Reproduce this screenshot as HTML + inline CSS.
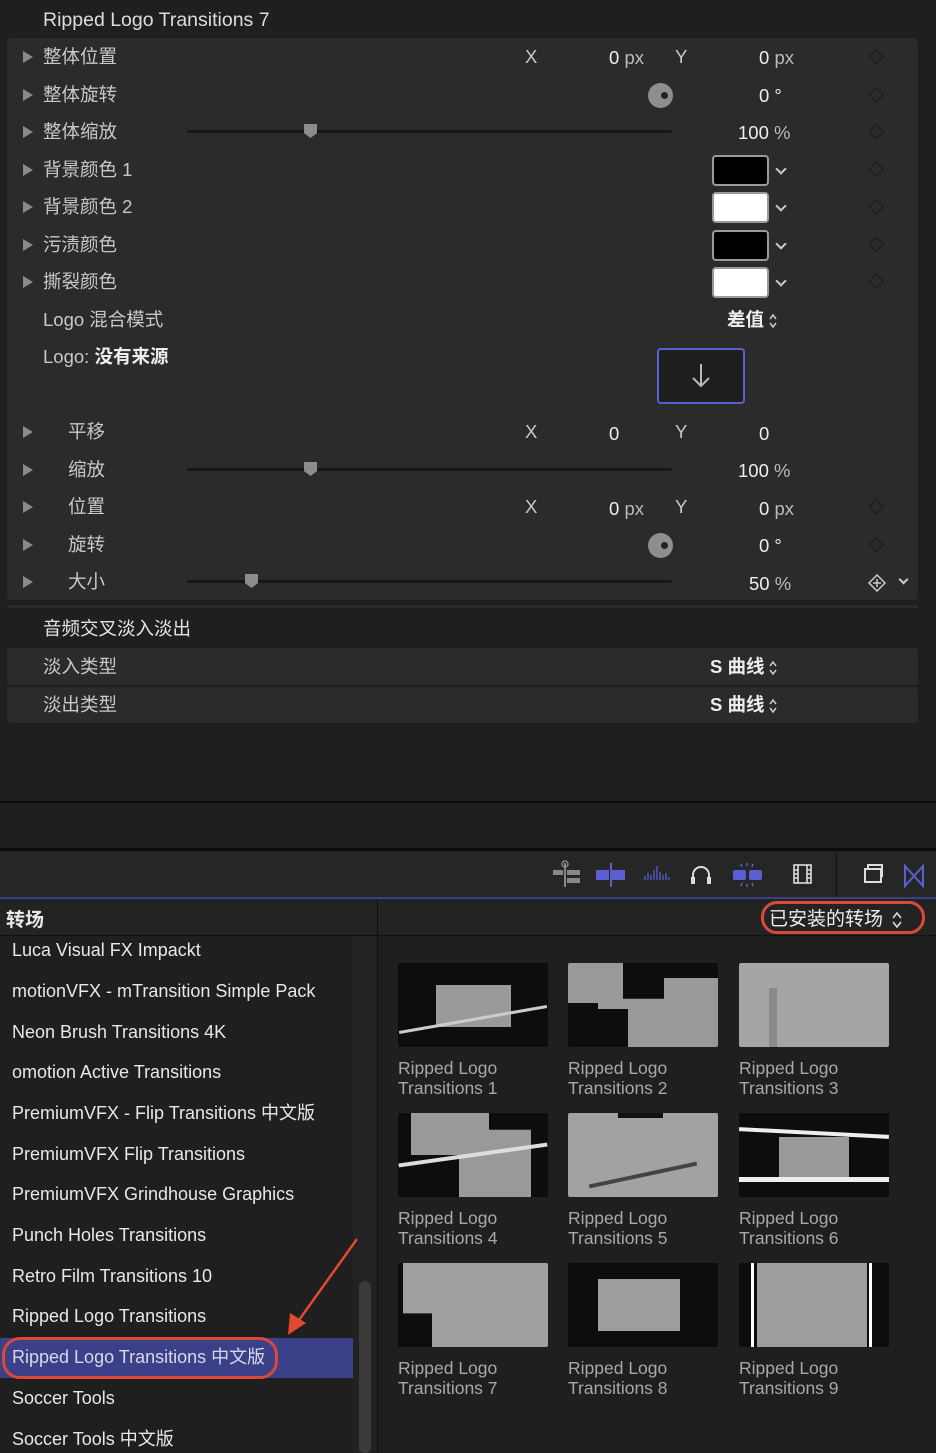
<!DOCTYPE html>
<html><head><meta charset="utf-8"><style>
*{margin:0;padding:0;box-sizing:border-box}
body{width:936px;height:1453px;background:#1f1f1f;font-family:"Liberation Sans","Noto Sans CJK SC",sans-serif;color:#c8c8c8;position:relative;overflow:hidden}
.a{position:absolute;white-space:nowrap}
.t{font-size:18.5px;line-height:22px}
.tri{position:absolute;width:0;height:0;border-left:10px solid #8a8a8a;border-top:6px solid transparent;border-bottom:6px solid transparent}
.dia{position:absolute;width:11px;height:11px;border:1.5px solid #1a1a1a;transform:rotate(45deg)}
.sl{position:absolute;height:3px;background:#171717;border-radius:2px}
.knob{position:absolute;width:13px;height:14px;background:#8c8c8c;clip-path:polygon(0 0,100% 0,100% 65%,50% 100%,0 65%)}
.rot{position:absolute;width:25px;height:25px;border-radius:50%;background:#8e8e8e}
.rot:after{content:"";position:absolute;left:13px;top:9px;width:7px;height:7px;border-radius:50%;background:#222}
.sw{position:absolute;left:712px;width:57px;height:31px;border:2px solid #9a9a9a;border-radius:4px}
.chev{position:absolute;left:777px;width:8px;height:8px;border-right:2px solid #ccc;border-bottom:2px solid #ccc;transform:rotate(45deg)}
.li{position:absolute;left:12px;font-size:18px;color:#e8e8e8;line-height:22px}
.th{position:absolute;width:150px;height:84px;border-radius:2px;overflow:hidden}
.lb{position:absolute;font-size:17.5px;color:#a8a8a8;line-height:20px}
.ud{display:inline-block;vertical-align:middle;margin-left:4px}
</style></head><body>
<div class="a" style="left:43px;top:9px;color:#ddd;font-size:19.5px;line-height:22px">Ripped Logo Transitions 7</div>
<div class="a" style="left:7px;top:38px;width:911px;height:562px;background:#2b2b2b;border-radius:4px"></div>

<div class="tri" style="left:23px;top:51px"></div><div class="a t" style="left:43px;top:46px">整体位置</div>
<div class="a t" style="left:525px;top:46px">X</div><div class="a t" style="left:609px;top:47px;color:#eee">0 <span style="color:#bbb">px</span></div>
<div class="a t" style="left:675px;top:46px">Y</div><div class="a t" style="left:759px;top:47px;color:#eee">0 <span style="color:#bbb">px</span></div>
<div class="dia" style="left:871px;top:51px"></div>

<div class="tri" style="left:23px;top:89px"></div><div class="a t" style="left:43px;top:84px">整体旋转</div>
<div class="rot" style="left:648px;top:83px"></div><div class="a t" style="left:759px;top:85px;color:#eee">0 °</div>
<div class="dia" style="left:871px;top:89px"></div>

<div class="tri" style="left:23px;top:126px"></div><div class="a t" style="left:43px;top:121px">整体缩放</div>
<div class="sl" style="left:187px;top:130px;width:485px"></div><div class="knob" style="left:304px;top:124px"></div>
<div class="a t" style="left:738px;top:122px;color:#eee">100 <span style="color:#bbb">%</span></div>
<div class="dia" style="left:871px;top:126px"></div>

<div class="tri" style="left:23px;top:164px"></div><div class="a t" style="left:43px;top:159px">背景颜色 1</div>
<div class="sw" style="top:155px;background:#000"></div><div class="chev" style="top:165px"></div><div class="dia" style="left:871px;top:164px"></div>
<div class="tri" style="left:23px;top:201px"></div><div class="a t" style="left:43px;top:196px">背景颜色 2</div>
<div class="sw" style="top:192px;background:#fff"></div><div class="chev" style="top:202px"></div><div class="dia" style="left:871px;top:201px"></div>
<div class="tri" style="left:23px;top:239px"></div><div class="a t" style="left:43px;top:234px">污渍颜色</div>
<div class="sw" style="top:230px;background:#000"></div><div class="chev" style="top:240px"></div><div class="dia" style="left:871px;top:239px"></div>
<div class="tri" style="left:23px;top:276px"></div><div class="a t" style="left:43px;top:271px">撕裂颜色</div>
<div class="sw" style="top:267px;background:#fff"></div><div class="chev" style="top:277px"></div><div class="dia" style="left:871px;top:276px"></div>

<div class="a t" style="left:43px;top:309px">Logo 混合模式</div>
<div class="a t" style="left:727px;top:309px;color:#eee;font-weight:bold">差值<svg class="ud" width="10" height="18"><path d="M2 7L5 3L8 7M2 11L5 15L8 11" stroke="#ccc" stroke-width="1.5" fill="none"/></svg></div>
<div class="a t" style="left:43px;top:346px">Logo: <b style="color:#eee">没有来源</b></div>
<div class="a" style="left:657px;top:348px;width:88px;height:56px;border:2px solid #5a5fd0;border-radius:4px;background:#1e1e1e"></div>
<svg class="a" style="left:690px;top:362px" width="22" height="28"><path d="M11 2V24M3 16L11 24L19 16" stroke="#bbb" stroke-width="2" fill="none"/></svg>

<div class="tri" style="left:23px;top:426px"></div><div class="a t" style="left:68px;top:421px">平移</div>
<div class="a t" style="left:525px;top:421px">X</div><div class="a t" style="left:609px;top:423px;color:#eee">0</div>
<div class="a t" style="left:675px;top:421px">Y</div><div class="a t" style="left:759px;top:423px;color:#eee">0</div>
<div class="tri" style="left:23px;top:464px"></div><div class="a t" style="left:68px;top:459px">缩放</div>
<div class="sl" style="left:187px;top:468px;width:485px"></div><div class="knob" style="left:304px;top:462px"></div>
<div class="a t" style="left:738px;top:460px;color:#eee">100 <span style="color:#bbb">%</span></div>
<div class="tri" style="left:23px;top:501px"></div><div class="a t" style="left:68px;top:496px">位置</div>
<div class="a t" style="left:525px;top:496px">X</div><div class="a t" style="left:609px;top:498px;color:#eee">0 <span style="color:#bbb">px</span></div>
<div class="a t" style="left:675px;top:496px">Y</div><div class="a t" style="left:759px;top:498px;color:#eee">0 <span style="color:#bbb">px</span></div>
<div class="dia" style="left:871px;top:501px"></div>
<div class="tri" style="left:23px;top:539px"></div><div class="a t" style="left:68px;top:534px">旋转</div>
<div class="rot" style="left:648px;top:533px"></div><div class="a t" style="left:759px;top:535px;color:#eee">0 °</div>
<div class="dia" style="left:871px;top:539px"></div>
<div class="tri" style="left:23px;top:576px"></div><div class="a t" style="left:68px;top:571px">大小</div>
<div class="sl" style="left:187px;top:580px;width:485px"></div><div class="knob" style="left:245px;top:574px"></div>
<div class="a t" style="left:749px;top:573px;color:#eee">50 <span style="color:#bbb">%</span></div>
<svg class="a" style="left:867px;top:573px" width="20" height="20"><path d="M10 2L18 10L10 18L2 10Z M10 6V14M6 10H14" stroke="#ccc" stroke-width="1.5" fill="none"/></svg>
<div class="a" style="left:900px;top:576px;width:7px;height:7px;border-right:2px solid #ccc;border-bottom:2px solid #ccc;transform:rotate(45deg)"></div>

<div class="a" style="left:7px;top:605px;width:911px;height:3px;background:#2b2b2b"></div>
<div class="a t" style="left:43px;top:618px;color:#e4e4e4">音频交叉淡入淡出</div>
<div class="a" style="left:7px;top:648px;width:911px;height:37px;background:#2b2b2b;border-radius:3px"></div>
<div class="a" style="left:7px;top:687px;width:911px;height:36px;background:#2b2b2b;border-radius:3px"></div>
<div class="a t" style="left:43px;top:656px">淡入类型</div>
<div class="a t" style="left:710px;top:656px;color:#eee;font-weight:bold">S 曲线<svg class="ud" width="10" height="18"><path d="M2 7L5 3L8 7M2 11L5 15L8 11" stroke="#ccc" stroke-width="1.5" fill="none"/></svg></div>
<div class="a t" style="left:43px;top:694px">淡出类型</div>
<div class="a t" style="left:710px;top:694px;color:#eee;font-weight:bold">S 曲线<svg class="ud" width="10" height="18"><path d="M2 7L5 3L8 7M2 11L5 15L8 11" stroke="#ccc" stroke-width="1.5" fill="none"/></svg></div>

<div class="a" style="left:0;top:801px;width:936px;height:2px;background:#0c0c0c"></div>
<div class="a" style="left:0;top:848px;width:936px;height:3px;background:#0c0c0c"></div>
<div class="a" style="left:0;top:851px;width:936px;height:47px;background:#262626"></div>
<div class="a" style="left:836px;top:851px;width:1px;height:47px;background:#111"></div>
<div class="a" style="left:0;top:897px;width:936px;height:2px;background:#3a3f8a"></div>
<svg class="a" style="left:548px;top:860px" width="390" height="32">
<g fill="#888"><rect x="5" y="10" width="10" height="5"/><rect x="19" y="10" width="13" height="5"/><rect x="19" y="18" width="13" height="5"/><rect x="16" y="3" width="2" height="24"/><circle cx="17" cy="4" r="3" fill="none" stroke="#888" stroke-width="1.5"/></g>
<g fill="#5a5fd0"><rect x="48" y="10" width="13" height="10"/><rect x="64" y="10" width="13" height="10"/><rect x="62" y="3" width="2" height="24"/></g>
<g stroke="#5a5fd0" stroke-width="1.3"><path d="M97 20v-4M100 20v-7M103 20v-5M106 20v-10M109 20v-14M112 20v-8M115 20v-5M118 20v-7M121 20v-3"/></g>
<path d="M145 23v-8a8 8 0 0 1 16 0v8" stroke="#ddd" stroke-width="2" fill="none"/><rect x="143" y="17" width="4" height="7" fill="#ddd"/><rect x="159" y="17" width="4" height="7" fill="#ddd"/>
<g fill="#5a5fd0"><rect x="185" y="10" width="13" height="10" rx="2"/><rect x="201" y="10" width="13" height="10" rx="2"/><path d="M199 3v3M193 4l1 3M205 4l-1 3M199 24v3M193 26l1-3M205 26l-1-3" stroke="#5a5fd0" stroke-width="1.5"/></g>
<g stroke="#ddd" stroke-width="1.6" fill="none"><rect x="246" y="5" width="17" height="18"/><path d="M250 5v18M259 5v18M246 10h4M246 14h4M246 18h4M259 10h4M259 14h4M259 18h4"/></g>
<g stroke="#ddd" stroke-width="2" fill="none"><rect x="317" y="9" width="16" height="13" fill="#262626"/><path d="M320 9V5h14v11h-1"/></g>
<path d="M357 6v20l18-20v20z" stroke="#5a5fd0" stroke-width="2" fill="none"/>
</svg>

<div class="a" style="left:0;top:899px;width:936px;height:36px;background:#232323"></div>
<div class="a" style="left:377px;top:899px;width:1px;height:554px;background:#0e0e0e"></div>
<div class="a" style="left:0;top:935px;width:936px;height:1px;background:#111"></div>
<div class="a" style="left:6px;top:905px;font-size:19px;color:#e8e8e8;font-weight:bold">转场</div>
<div class="a" style="left:761px;top:901px;width:164px;height:33px;border:3px solid #d94a3a;border-radius:16px"></div>
<div class="a" style="left:769px;top:904px;font-size:19px;color:#eee">已安装的转场<svg class="ud" style="margin-left:8px" width="12" height="22"><path d="M2 9L6 4L10 9M2 13L6 18L10 13" stroke="#ddd" stroke-width="1.6" fill="none"/></svg></div>

<div class="a" style="left:353px;top:936px;width:24px;height:517px;background:#222"></div>
<div class="a" style="left:359px;top:1281px;width:12px;height:172px;background:#3a3a3a;border-radius:6px"></div>
<div class="a" style="left:0;top:1338px;width:353px;height:40px;background:#3c4088"></div>
<div class="a" style="left:2px;top:1337px;width:276px;height:42px;border:3px solid #d94a3a;border-radius:18px"></div>
<div class="li" style="top:939px">Luca Visual FX Impackt</div>
<div class="li" style="top:980px">motionVFX - mTransition Simple Pack</div>
<div class="li" style="top:1021px">Neon Brush Transitions 4K</div>
<div class="li" style="top:1061px">omotion Active Transitions</div>
<div class="li" style="top:1102px">PremiumVFX - Flip Transitions 中文版</div>
<div class="li" style="top:1143px">PremiumVFX Flip Transitions</div>
<div class="li" style="top:1183px">PremiumVFX Grindhouse Graphics</div>
<div class="li" style="top:1224px">Punch Holes Transitions</div>
<div class="li" style="top:1265px">Retro Film Transitions 10</div>
<div class="li" style="top:1305px">Ripped Logo Transitions</div>
<div class="li" style="top:1346px;color:#d8d8e8">Ripped Logo Transitions 中文版</div>
<div class="li" style="top:1387px">Soccer Tools</div>
<div class="li" style="top:1428px">Soccer Tools 中文版</div>
<svg class="a" style="left:280px;top:1235px" width="85" height="105"><path d="M77 4L14 92" stroke="#e04a30" stroke-width="2.5"/><path d="M8 100L10 78L26 88Z" fill="#e04a30"/></svg>

<div class="th" style="left:398px;top:963px;background:#0d0d0d"><div class="a" style="left:38px;top:22px;width:75px;height:42px;background:#9a9a9a"></div><div class="a" style="left:0;top:55px;width:150px;height:3px;background:#ccc;transform:rotate(-10deg)"></div></div>
<div class="th" style="left:568px;top:963px;background:#0d0d0d"><div class="a" style="left:0;top:0;width:55px;height:40px;background:#999"></div><div class="a" style="left:30px;top:15px;width:120px;height:69px;background:#999;clip-path:polygon(55% 0,100% 0,100% 100%,25% 100%,25% 45%,0 45%,0 30%,55% 30%)"></div></div>
<div class="th" style="left:739px;top:963px;background:#a5a5a5"><div class="a" style="left:30px;top:25px;width:8px;height:59px;background:#8a8a8a"></div></div>
<div class="th" style="left:398px;top:1113px;background:#0d0d0d"><div class="a" style="left:13px;top:0;width:120px;height:84px;background:#999;clip-path:polygon(0 0,65% 0,65% 20%,100% 20%,100% 100%,40% 100%,40% 50%,0 50%)"></div><div class="a" style="left:0;top:40px;width:150px;height:4px;background:#ddd;transform:rotate(-8deg)"></div></div>
<div class="th" style="left:568px;top:1113px;background:#a2a2a2"><div class="a" style="left:50px;top:0;width:45px;height:5px;background:#111"></div><div class="a" style="left:20px;top:60px;width:110px;height:4px;background:#444;transform:rotate(-12deg)"></div></div>
<div class="th" style="left:739px;top:1113px;background:#0d0d0d"><div class="a" style="left:40px;top:24px;width:70px;height:40px;background:#9a9a9a"></div><div class="a" style="left:0;top:18px;width:150px;height:4px;background:#eee;transform:rotate(3deg)"></div><div class="a" style="left:0;top:64px;width:150px;height:5px;background:#eee"></div></div>
<div class="th" style="left:398px;top:1263px;background:#0d0d0d"><div class="a" style="left:5px;top:0;width:145px;height:84px;background:#a0a0a0;clip-path:polygon(0 0,100% 0,100% 100%,20% 100%,20% 60%,0 60%)"></div></div>
<div class="th" style="left:568px;top:1263px;background:#0d0d0d"><div class="a" style="left:30px;top:16px;width:82px;height:52px;background:#9d9d9d"></div></div>
<div class="th" style="left:739px;top:1263px;background:#0d0d0d"><div class="a" style="left:18px;top:0;width:110px;height:84px;background:#9d9d9d"></div><div class="a" style="left:12px;top:0;width:3px;height:84px;background:#fff"></div><div class="a" style="left:130px;top:0;width:3px;height:84px;background:#fff"></div></div>
<div class="lb" style="left:398px;top:1058px">Ripped Logo<br>Transitions 1</div>
<div class="lb" style="left:568px;top:1058px">Ripped Logo<br>Transitions 2</div>
<div class="lb" style="left:739px;top:1058px">Ripped Logo<br>Transitions 3</div>
<div class="lb" style="left:398px;top:1208px">Ripped Logo<br>Transitions 4</div>
<div class="lb" style="left:568px;top:1208px">Ripped Logo<br>Transitions 5</div>
<div class="lb" style="left:739px;top:1208px">Ripped Logo<br>Transitions 6</div>
<div class="lb" style="left:398px;top:1358px">Ripped Logo<br>Transitions 7</div>
<div class="lb" style="left:568px;top:1358px">Ripped Logo<br>Transitions 8</div>
<div class="lb" style="left:739px;top:1358px">Ripped Logo<br>Transitions 9</div>
</body></html>
